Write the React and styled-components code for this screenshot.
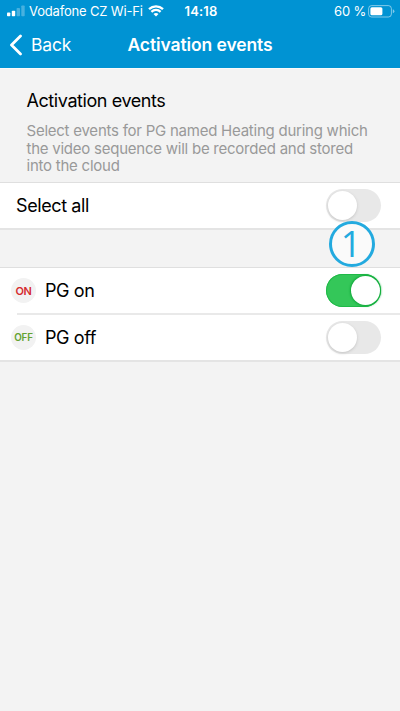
import React from 'react';
import styled, { createGlobalStyle } from 'styled-components';

const GlobalStyle = createGlobalStyle`
  * {
    box-sizing: border-box;
  }
  body {
    margin: 0;
    background: #f3f3f3;
    font-family: Inter, "Liberation Sans", sans-serif;
    color: #000;
  }
`;

const Screen = styled.main`
  width: 400px;
  height: 711px;
  overflow: hidden;
  background: #f3f3f3;
`;

const Header = styled.header`
  height: 68px;
  background: #0093d3;
  color: #fff;
`;

const StatusBar = styled.div`
  display: grid;
  grid-template-columns: 1fr auto 1fr;
  align-items: center;
  height: 22px;
  padding: 0 5px 0 7px;
`;

const StatusGroup = styled.div`
  display: flex;
  align-items: center;
  justify-content: ${props => props.$end ? 'flex-end' : 'flex-start'};
`;

const StatusText = styled.span`
  font-size: 13px;
  line-height: 22px;
  font-weight: ${props => props.$bold ? 600 : 400};
  letter-spacing: ${props => props.$spacing || '0'};
  margin: ${props => props.$margin || '0'};
  white-space: nowrap;
`;

const NavBar = styled.nav`
  display: grid;
  grid-template-columns: 1fr auto 1fr;
  align-items: center;
  height: 46px;
  padding: 0 0 0 9px;
`;

const BackButton = styled.button`
  display: flex;
  align-items: center;
  gap: 9px;
  padding: 0;
  border: 0;
  background: none;
  color: #fff;
  font: 400 17.5px/22px Inter, sans-serif;
  letter-spacing: -0.2px;
`;

const NavTitle = styled.h1`
  margin: 0 9px 0 0;
  font-size: 17.5px;
  line-height: 22px;
  font-weight: 600;
  letter-spacing: -0.1px;
`;

const Intro = styled.section`
  height: 114px;
  padding: 21px 26.5px 0;
  border-top: 1px solid #fafafa;
`;

const Heading = styled.h2`
  margin: 0 0 10px;
  font-size: 18px;
  line-height: 22px;
  font-weight: 400;
  letter-spacing: -0.42px;
`;

const Description = styled.p`
  margin: 0;
  color: #999;
  font-size: 15px;
  line-height: 17.5px;
  letter-spacing: -0.24px;
  white-space: nowrap;
`;

const List = styled.div`
  position: relative;
  background: #fff;
  border-top: 1px solid #dfdfdf;
  border-bottom: 2px solid #e4e4e4;
  margin-top: ${props => props.$gap || 0}px;
`;

const Row = styled.div`
  display: flex;
  align-items: center;
  height: 45px;
  padding: 0 19px 0 ${props => props.$icon ? 11 : 16}px;
`;

const Divider = styled.div`
  height: 2px;
  margin-left: 17px;
  background: #e9e9e9;
`;

const Label = styled.span`
  flex: 1;
  font-size: 18px;
  line-height: 24px;
  letter-spacing: -0.4px;
`;

const StateIcon = styled.span`
  display: flex;
  align-items: center;
  justify-content: center;
  width: 25px;
  height: 25px;
  margin-right: 9px;
  border-radius: 50%;
  background: #f2f2f2;
  color: ${props => props.$color};
  font-size: ${props => props.$size}px;
  font-weight: 600;
  letter-spacing: ${props => props.$spacing};
`;

const Switch = styled.button`
  display: flex;
  justify-content: ${props => props.$on ? 'flex-end' : 'flex-start'};
  width: 55px;
  height: 33px;
  padding: 2px 1.5px;
  border: 0;
  border-radius: 17px;
  background: ${props => props.$on ? '#34c759' : '#e8e8e8'};
  box-shadow: ${props => props.$on ? 'inset 0 0 0 1px #20b948' : 'none'};
`;

const Knob = styled.span`
  width: 29px;
  height: 29px;
  border-radius: 50%;
  background: #fff;
  box-shadow: ${props => props.$on ? '0 0 2px 1px #10a83a' : '0 1px 3px #c4c4c4'};
`;

const StepMarker = styled.div`
  position: absolute;
  z-index: 1;
  top: 38px;
  left: 329px;
  display: flex;
  align-items: center;
  justify-content: center;
  width: 46px;
  height: 46px;
  padding-right: 2px;
  border: 3px solid #23aadf;
  border-radius: 50%;
  background: #fafafa;
  color: #23aadf;
  font: 500 36px/40px "Open Sans", sans-serif;
`;

const Toggle = ({ on, label }) => (
  <Switch $on={on} role="switch" aria-checked={!!on} aria-label={label}>
    <Knob $on={on} />
  </Switch>
);

const Signal = () => (
  <svg width="18" height="12" viewBox="0 0 18 12" fill="#fff">
    <rect y="7.5" width="3.3" height="3.7" rx="0.8" />
    <rect x="4.8" y="5.7" width="3.4" height="5.5" rx="0.8" />
    <rect x="9.6" y="3" width="3.4" height="8.2" rx="0.8" opacity="0.28" />
    <rect x="14.3" y="0.5" width="3.4" height="10.7" rx="0.8" opacity="0.28" />
  </svg>
);

const Wifi = () => (
  <svg width="16" height="12" viewBox="0 0 16 12" fill="none" stroke="#fff" strokeWidth="2.3">
    <path d="M1 4.2C5 .4 11 .4 15 4.2M3.4 6.8C6 4.3 10 4.3 12.6 6.8" />
    <path d="M5.5 8.9C6.9 7.6 9.1 7.6 10.5 8.9L8 11.4Z" fill="#fff" stroke="none" />
  </svg>
);

const Battery = () => (
  <svg width="27" height="13" viewBox="0 0 27 13">
    <rect x="0.6" y="0.6" width="22.8" height="11.4" rx="3" fill="none" stroke="#fff" strokeOpacity="0.5" />
    <rect x="2.4" y="2.3" width="12" height="8" rx="1.5" fill="#fff" />
    <path d="M24.8 4.3Q26.4 4.8 26.4 6.3T24.8 8.3Z" fill="#fff" opacity="0.5" />
  </svg>
);

const Chevron = () => (
  <svg width="13" height="22" viewBox="0 0 13 22" fill="none" stroke="#fff" strokeWidth="2.8" strokeLinecap="round" strokeLinejoin="round">
    <path d="M11.5 2L2.5 11L11.5 20" />
  </svg>
);

export default function App() {
  return (
    <>
      <GlobalStyle />
      <Screen>
        <Header>
          <StatusBar>
            <StatusGroup>
              <Signal />
              <StatusText $margin="0 5px 0 4px" $spacing="-0.17px">Vodafone CZ Wi-Fi</StatusText>
              <Wifi />
            </StatusGroup>
            <StatusText $bold $spacing="0.2px">14:18</StatusText>
            <StatusGroup $end>
              <StatusText $margin="0 2px 0 0" $spacing="-0.2px">60 %</StatusText>
              <Battery />
            </StatusGroup>
          </StatusBar>
          <NavBar>
            <BackButton>
              <Chevron />
              Back
            </BackButton>
            <NavTitle>Activation events</NavTitle>
          </NavBar>
        </Header>
        <Intro>
          <Heading>Activation events</Heading>
          <Description>
            Select events for PG named Heating during which
            <br />
            the video sequence will be recorded and stored
            <br />
            into the cloud
          </Description>
        </Intro>
        <List>
          <Row>
            <Label>Select all</Label>
            <Toggle label="Select all" />
          </Row>
          <StepMarker>1</StepMarker>
        </List>
        <List $gap={37}>
          <Row $icon>
            <StateIcon $color="#d52b2e" $size={11} $spacing="-0.3px">ON</StateIcon>
            <Label>PG on</Label>
            <Toggle on label="PG on" />
          </Row>
          <Divider />
          <Row $icon>
            <StateIcon $color="#64a332" $size={9.8} $spacing="-0.1px">OFF</StateIcon>
            <Label>PG off</Label>
            <Toggle label="PG off" />
          </Row>
        </List>
      </Screen>
    </>
  );
}
